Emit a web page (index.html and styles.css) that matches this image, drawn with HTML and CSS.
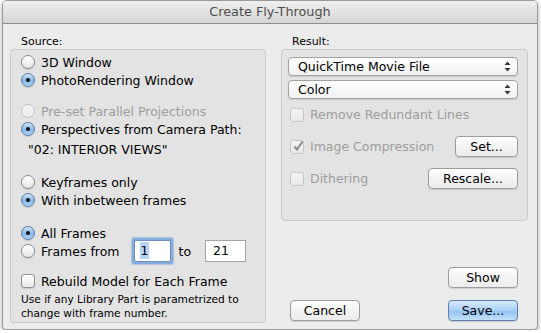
FILE: index.html
```html
<!DOCTYPE html>
<html lang="en">

<head>
	<meta charset="UTF-8">
	<title>Create Fly-Through</title>
	<link rel="stylesheet" href="styles.css">
</head>

<body>
	<div class="window">
		<div class="titlebar">Create Fly-Through</div>
		<div class="content">

			<div class="col">
				<div class="group-label">Source:</div>
				<div class="group group-source">
					<div class="row"><span class="radio"></span>3D Window</div>
					<div class="row"><span class="radio on"></span>PhotoRendering Window</div>

					<div class="row disabled space-13"><span class="radio"></span>Pre-set Parallel Projections</div>
					<div class="row"><span class="radio on"></span>Perspectives from Camera Path:</div>
					<div class="row path">"02: INTERIOR VIEWS"</div>

					<div class="row space-15"><span class="radio"></span>Keyframes only</div>
					<div class="row"><span class="radio on"></span>With inbetween frames</div>

					<div class="row space-15"><span class="radio on"></span>All Frames</div>
					<div class="row"><span class="radio"></span>Frames from
						<span class="field field-from focused"><span class="selected">1</span></span>
						<span class="to">to</span>
						<span class="field field-to">21</span>
					</div>

					<div class="row space-12"><span class="checkbox"></span>Rebuild Model for Each Frame</div>
					<div class="note">Use if any Library Part is parametrized to<br>change with frame number.</div>
				</div>
			</div>

			<div class="col">
				<div class="group-label">Result:</div>
				<div class="group group-result">
					<div class="popup">QuickTime Movie File
						<svg class="arrows" width="7" height="11" viewBox="0 0 7 11"><polygon points="0.5,4 3.5,0.5 6.5,4" /><polygon points="0.5,7 3.5,10.5 6.5,7" /></svg>
					</div>
					<div class="popup">Color
						<svg class="arrows" width="7" height="11" viewBox="0 0 7 11"><polygon points="0.5,4 3.5,0.5 6.5,4" /><polygon points="0.5,7 3.5,10.5 6.5,7" /></svg>
					</div>

					<div class="opt-row first">
						<div class="opt disabled"><span class="checkbox"></span>Remove Redundant Lines</div>
					</div>
					<div class="opt-row">
						<div class="opt disabled"><span class="checkbox checked"><svg width="12" height="12" viewBox="0 0 12 12"><path d="M2.5 6.5 L5 9.5 L10.5 1.5" /></svg></span>Image Compression</div>
						<button class="btn btn-set">Set...</button>
					</div>
					<div class="opt-row">
						<div class="opt disabled"><span class="checkbox"></span>Dithering</div>
						<button class="btn btn-rescale">Rescale...</button>
					</div>
				</div>

				<div class="actions">
					<div class="action-row show-row">
						<button class="btn btn-wide">Show</button>
					</div>
					<div class="action-row">
						<button class="btn btn-wide">Cancel</button>
						<button class="btn btn-wide btn-default">Save...</button>
					</div>
				</div>
			</div>

		</div>
	</div>
</body>

</html>
```

FILE: styles.css
```css
* {
	font-family: 'DejaVu Sans', sans-serif;
}

body {
	margin: 0;
	background: #ffffff;
}

.window {
	width: 536px;
	height: 330px;
	margin-left: 2px;
	box-sizing: border-box;
	border: 1px solid #9a9a9a;
	border-radius: 5px 5px 4px 4px;
	background: #ececec;
	overflow: hidden;
	box-shadow: 0 2px 5px rgba(0, 0, 0, 0.35);
}

.titlebar {
	height: 22px;
	line-height: 22px;
	text-align: center;
	font-size: 12.8px;
	color: #4d4d4d;
	background: linear-gradient(#efefef, #d5d5d5);
	border-bottom: 1px solid #8c8c8c;
}

.content {
	display: grid;
	grid-template-columns: 256px 247px;
	column-gap: 15px;
	padding: 0 9px 0 7px;
}

.group-label {
	height: 25px;
	box-sizing: border-box;
	padding: 11px 0 0 11px;
	font-size: 11px;
	line-height: 13px;
	color: #000;
}

.group {
	box-sizing: border-box;
	border: 1px solid #c9c9c9;
	border-radius: 4px;
	background: #e3e3e3;
}

.group-source {
	height: 274px;
	padding: 3px 0 0 10px;
}

.row {
	display: flex;
	align-items: center;
	height: 18px;
	font-size: 12.5px;
	color: #000;
	white-space: nowrap;
}

.space-12 {
	margin-top: 12px;
}

.space-13 {
	margin-top: 13px;
}

.space-15 {
	margin-top: 15px;
}

.disabled {
	color: #9d9d9d;
}

.path {
	margin-top: 2px;
	padding-left: 7px;
}

/* radio buttons */
.radio {
	width: 14px;
	height: 14px;
	box-sizing: border-box;
	border-radius: 50%;
	border: 1px solid #8c8c8c;
	background: linear-gradient(#ffffff, #e6e6e6);
	box-shadow: 0 1px 1px rgba(0, 0, 0, 0.12);
	margin-right: 6px;
	flex: none;
	position: relative;
}

.disabled .radio {
	border-color: #c4c4c4;
	background: linear-gradient(#f4f4f4, #ececec);
	box-shadow: none;
}

.radio.on {
	border-color: #5b7ba4;
	background: linear-gradient(#cfe4f8, #86b7e7 55%, #b0d4f5);
}

.radio.on::after {
	content: "";
	position: absolute;
	left: 4px;
	top: 4px;
	width: 4px;
	height: 4px;
	border-radius: 50%;
	background: #111;
}

/* checkboxes */
.checkbox {
	width: 14px;
	height: 14px;
	box-sizing: border-box;
	border: 1px solid #8f8f8f;
	border-radius: 3px;
	background: linear-gradient(#ffffff, #e9e9e9);
	box-shadow: 0 1px 1px rgba(0, 0, 0, 0.1);
	margin-right: 6px;
	flex: none;
	position: relative;
}

.disabled .checkbox {
	border-color: #c6c6c6;
	background: linear-gradient(#f3f3f3, #eaeaea);
	box-shadow: none;
}

.checkbox svg {
	position: absolute;
	left: 1px;
	top: -1px;
}

.checkbox path {
	fill: none;
	stroke: #8a8a8a;
	stroke-width: 2;
}

/* text fields */
.field {
	height: 22px;
	box-sizing: border-box;
	border: 1px solid #a5a5a5;
	background: #fff;
	font-size: 12.5px;
	line-height: 20px;
	padding-left: 5px;
	flex: none;
}

.field-from {
	width: 37px;
	margin-left: 14px;
	border-color: #6e8fbf;
	border-radius: 1px;
}

.focused {
	box-shadow: 0 0 0 2px #86acdc, 0 0 1px 3px rgba(120, 160, 215, 0.5);
}

.selected {
	background: #b5d5fc;
	padding: 1px 1px;
}

.to {
	margin: 0 14px 0 8px;
}

.field-to {
	width: 41px;
	padding-left: 7px;
}

.note {
	font-size: 10.6px;
	line-height: 14px;
	margin-top: 2px;
	color: #000;
}

/* result box */
.group-result {
	height: 172px;
	padding: 7px 9px 0 6px;
}

.popup {
	height: 19px;
	box-sizing: border-box;
	border: 1px solid #a2a2a2;
	border-radius: 4px;
	background: linear-gradient(#ffffff, #f1f1f1);
	box-shadow: 0 1px 1px rgba(0, 0, 0, 0.12);
	font-size: 12.5px;
	line-height: 17px;
	padding-left: 9px;
	margin-bottom: 4px;
	display: flex;
	justify-content: space-between;
	align-items: center;
}

.arrows {
	margin-right: 6px;
}

.arrows polygon {
	fill: #3a3a3a;
}

.opt-row {
	display: flex;
	justify-content: space-between;
	align-items: center;
	height: 21px;
	margin-top: 11px;
	padding-left: 2px;
}

.opt-row.first {
	margin-top: 5px;
}

.opt {
	display: flex;
	align-items: center;
	font-size: 12.5px;
}

/* push buttons */
.btn {
	height: 21px;
	box-sizing: border-box;
	border: 1px solid #9c9c9c;
	border-radius: 4px;
	background: linear-gradient(#ffffff, #f3f3f3 50%, #ececec);
	box-shadow: 0 1px 1px rgba(0, 0, 0, 0.12);
	font-size: 12.5px;
	color: #000;
	padding: 0;
	text-align: center;
}

.btn-set {
	width: 63px;
}

.btn-rescale {
	width: 90px;
}

.btn-wide {
	width: 70px;
}

.btn-default {
	border-color: #5a7fb0;
	background: linear-gradient(#d7eafb, #a8cff5 50%, #8fc0f1 51%, #c3e2fb);
}

.actions {
	padding: 0 10px 0 9px;
}

.action-row {
	display: flex;
	justify-content: space-between;
	margin-top: 12px;
}

.show-row {
	justify-content: flex-end;
	margin-top: 46px;
}
```
